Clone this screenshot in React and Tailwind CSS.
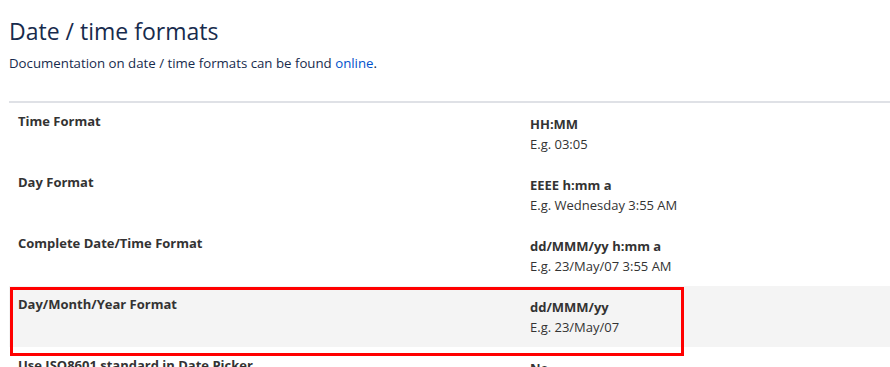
import React from "react";

const rows = [
  { label: "Time Format", value: "HH:MM", example: "E.g. 03:05" },
  { label: "Day Format", value: "EEEE h:mm a", example: "E.g. Wednesday 3:55 AM" },
  {
    label: "Complete Date/Time Format",
    value: "dd/MMM/yy h:mm a",
    example: "E.g. 23/May/07 3:55 AM",
  },
  {
    label: "Day/Month/Year Format",
    value: "dd/MMM/yy",
    example: "E.g. 23/May/07",
    highlight: true,
  },
  { label: "Use ISO8601 standard in Date Picker", value: "No", example: "" },
];

const App = () => {
  return (
    <div
      className="w-[890px] h-[367px] overflow-hidden bg-white pl-[9px]"
      style={{ fontFamily: '"Open Sans", "Noto Sans", sans-serif' }}
    >
      {/* Header */}
      <h1 className="pt-[15px] text-[23px] leading-[32px] text-[#172b4d] font-normal">
        Date / time formats
      </h1>
      <p className="mt-[6px] text-[13.25px] leading-[20px] text-[#172b4d]">
        Documentation on date / time formats can be found{" "}
        <a href="#" className="text-[#0052cc]">
          online
        </a>
        .
      </p>

      {/* Table */}
      <div className="mt-[28px] border-t-2 border-[#dfe1e6]">
        {rows.map((row, i) => (
          <div
            key={i}
            className={`relative grid grid-cols-[521px_1fr] h-[61px] ${
              row.highlight ? "bg-[#f4f4f4]" : ""
            }`}
          >
            <div className="pl-[9px] pt-[8px] text-[13px] leading-[20px] font-bold text-[#333333]">
              {row.label}
            </div>
            <div className="pt-[11px] text-[13px] leading-[20px] text-[#333333]">
              <div className="font-bold">{row.value}</div>
              <div>{row.example}</div>
            </div>
            {row.highlight && (
              <div className="absolute left-[1px] top-[1px] w-[674px] h-[69px] border-[3px] border-[#ff0000] pointer-events-none" />
            )}
          </div>
        ))}
      </div>
    </div>
  );
};

export default App;
